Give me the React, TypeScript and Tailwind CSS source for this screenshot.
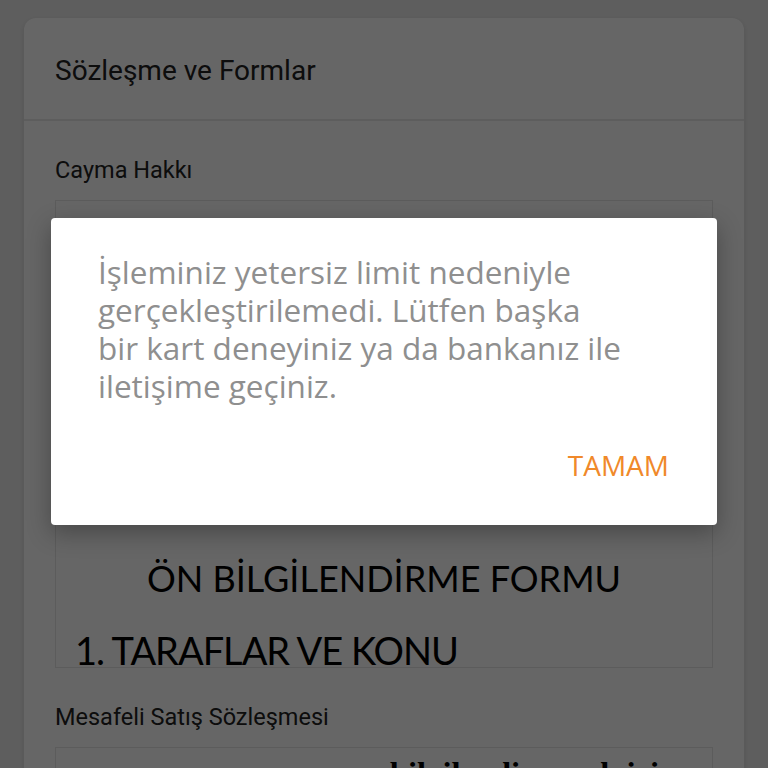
import React from "react";

export default function App() {
  return (
    <div className="relative h-[768px] w-[768px] overflow-hidden bg-[#ececec] font-['Roboto',sans-serif]">
      <div className="mx-[24px] mt-[18px] rounded-[12px] bg-white shadow-[0_2px_6px_rgba(0,0,0,0.12)]">
        <div className="flex h-[101px] items-center pl-[31px] pt-[4px] text-[28px] text-[#222]">
          Sözleşme ve Formlar
        </div>
        <div className="h-[2px] bg-[#e8e8e8]" />
        <div className="px-[31px] pt-[34px]">
          <div className="text-[23.5px] leading-[30px] text-[#222]">Cayma Hakkı</div>
          <div className="mt-[15px] h-[468px] overflow-hidden border border-[#e6e6e6] bg-[#fefefe]">
            <div className="pt-[355px] text-center font-['Lato',sans-serif] text-[36px] leading-[44px] text-black">
              ÖN BİLGİLENDİRME FORMU
            </div>
            <div className="mt-[26px] pl-[19px] font-['Lato',sans-serif] text-[38px] leading-[48px] tracking-[-1px] text-black">
              1. TARAFLAR VE KONU
            </div>
          </div>
          <div className="mt-[34px] text-[23.5px] leading-[30px] text-[#222]">Mesafeli Satış Sözleşmesi</div>
          <div className="mt-[15px] h-[200px] overflow-hidden border border-[#e6e6e6] bg-[#fefefe]">
            <div className="pl-[334px] pt-[7px] font-['Liberation_Serif',serif] text-[32.5px] font-bold leading-[36px] text-black">
              bilgilendirme alı için
            </div>
          </div>
        </div>
      </div>

      <div className="absolute inset-0 bg-black/60" />

      <div className="absolute left-[51px] top-[218px] h-[307px] w-[666px] rounded-[4px] bg-white shadow-[0_8px_24px_rgba(0,0,0,0.3)]">
        <p className="pl-[47px] pt-[35px] font-['Open_Sans',sans-serif] text-[31.5px] leading-[38px] text-[#8f8f8f]">
          İşleminiz yetersiz limit nedeniyle
          <br />
          gerçekleştirilemedi. Lütfen başka
          <br />
          bir kart deneyiniz ya da bankanız ile
          <br />
          iletişime geçiniz.
        </p>
        <div className="mt-[42px] flex justify-end pr-[48px]">
          <button className="font-['Open_Sans',sans-serif] text-[28px] leading-[36px] text-[#f0892a]">TAMAM</button>
        </div>
      </div>
    </div>
  );
}
